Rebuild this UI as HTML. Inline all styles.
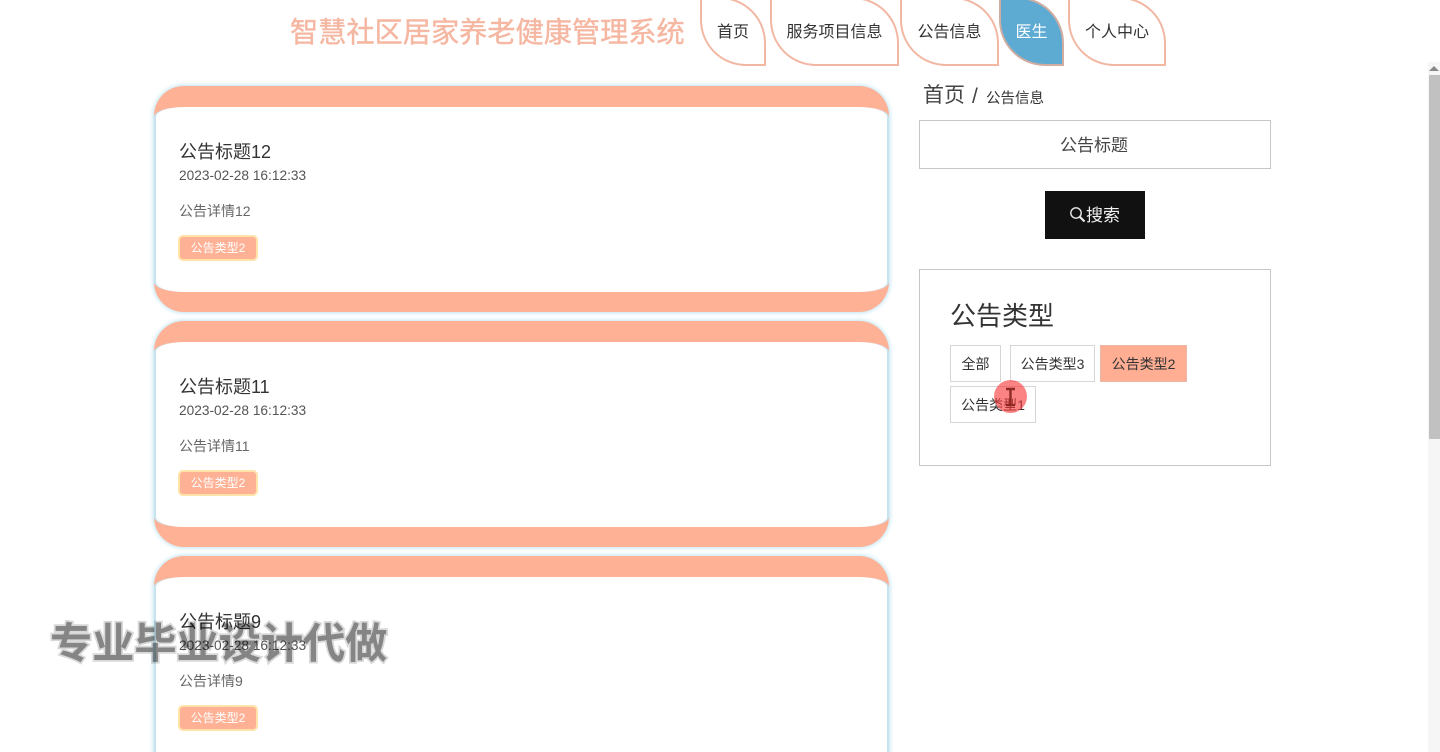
<!DOCTYPE html>
<html lang="zh-CN">
<head>
<meta charset="utf-8">
<title>智慧社区居家养老健康管理系统</title>
<style>
html,body{margin:0;padding:0;width:1440px;height:752px;overflow:hidden;background:#fff;}
body{position:relative;font-family:"Liberation Sans","Noto Sans CJK SC",sans-serif;color:#333;}
.a{position:absolute;white-space:nowrap;}
.nav{position:absolute;top:-3px;height:69px;box-sizing:border-box;border:2px solid #f2b7a3;border-radius:0 46px 0 46px;text-align:center;line-height:68px;font-size:16px;color:#333;}
.card{position:absolute;left:154px;width:735px;height:226px;box-sizing:border-box;background:#ffb196;border-radius:30px;box-shadow:0 0 4px 1px #bfe3ef;overflow:hidden;}
.inner{position:absolute;left:0;right:0;top:21px;height:185px;background:#fff;border-radius:30px/10px;border-left:2px solid #c6e3ee;border-right:2px solid #c6e3ee;box-sizing:border-box;}
.t{left:23px;font-size:18px;line-height:24px;color:#333;top:33px;}
.d{left:23px;font-size:13.7px;line-height:20px;color:#555;top:59px;}
.x{left:23px;font-size:14px;line-height:20px;color:#666;top:94px;}
.tag{left:22px;top:128px;width:80px;height:26px;box-sizing:border-box;background:#ffb196;border:2px solid #ffe3a8;border-radius:5px;color:#fff;font-size:12px;line-height:22px;text-align:center;}
.f{position:absolute;height:37px;box-sizing:border-box;border:1px solid #d6d6d6;font-size:14px;line-height:37px;text-align:center;color:#333;background:#fff;}
</style>
</head>
<body>

<div class="a" style="left:290px;top:12px;font-size:28.2px;line-height:40px;color:#f5b7a2;-webkit-text-stroke:.4px #f5b7a2;">智慧社区居家养老健康管理系统</div>

<div class="nav" style="left:700px;width:66px;">首页</div>
<div class="nav" style="left:770px;width:129px;">服务项目信息</div>
<div class="nav" style="left:900px;width:99px;">公告信息</div>
<div class="nav" style="left:999px;width:65px;background:#5dabd3;color:#fff;border-color:#d0ada0;">医生</div>
<div class="nav" style="left:1068px;width:98px;">个人中心</div>

<div class="card" style="top:86px;">
  <div class="inner">
    <div class="a t">公告标题12</div>
    <div class="a d">2023-02-28 16:12:33</div>
    <div class="a x">公告详情12</div>
    <div class="a tag">公告类型2</div>
  </div>
</div>
<div class="card" style="top:321px;">
  <div class="inner">
    <div class="a t">公告标题11</div>
    <div class="a d">2023-02-28 16:12:33</div>
    <div class="a x">公告详情11</div>
    <div class="a tag">公告类型2</div>
  </div>
</div>
<div class="card" style="top:556px;">
  <div class="inner">
    <div class="a t">公告标题9</div>
    <div class="a d">2023-02-28 16:12:33</div>
    <div class="a x">公告详情9</div>
    <div class="a tag">公告类型2</div>
  </div>
</div>

<div class="a" style="left:923px;top:81px;font-size:21px;line-height:30px;color:#444;">首页</div>
<div class="a" style="left:972px;top:82px;font-size:21px;line-height:30px;color:#444;">/</div>
<div class="a" style="left:986px;top:89px;font-size:14.5px;line-height:20px;color:#333;">公告信息</div>

<div class="a" style="left:919px;top:120px;width:352px;height:49px;box-sizing:border-box;border:1px solid #c6c6c6;text-align:center;font-size:17px;line-height:49px;text-indent:-2px;color:#444;">公告标题</div>

<div class="a" style="left:1045px;top:191px;width:100px;height:48px;background:#111;"></div>
<svg class="a" style="left:1069px;top:206px;" width="17" height="17" viewBox="0 0 17 17"><circle cx="7" cy="7" r="5.2" fill="none" stroke="#e8e8e8" stroke-width="1.4"/><path d="M10.8 10.8L15.5 15.5" stroke="#e8e8e8" stroke-width="2.2"/></svg>
<div class="a" style="left:1086px;top:203px;font-size:17px;line-height:26px;color:#f2f2f2;">搜索</div>

<div class="a" style="left:919px;top:269px;width:352px;height:197px;box-sizing:border-box;border:1px solid #c6c6c6;"></div>
<div class="a" style="left:950px;top:298px;font-size:26px;line-height:36px;color:#333;">公告类型</div>
<div class="f" style="left:950px;top:345px;width:51px;">全部</div>
<div class="f" style="left:1010px;top:345px;width:85px;">公告类型3</div>
<div class="f" style="left:1100px;top:345px;width:87px;background:#ffae94;border-color:#e8b8a4;">公告类型2</div>
<div class="f" style="left:950px;top:386px;width:86px;">公告类型1</div>

<div class="a" style="left:994px;top:380px;width:33px;height:33px;border-radius:50%;background:rgba(250,55,55,.62);"></div>
<svg class="a" style="left:1003px;top:386px;" width="15" height="22" viewBox="0 0 15 22"><path d="M3 3H12M3 19H12M7.5 3V19" stroke="#8f2a22" stroke-width="2.4" fill="none"/></svg>

<div class="a" style="left:50px;top:617px;font-size:42.2px;line-height:54px;font-weight:700;color:#858585;-webkit-text-stroke:3.5px #d8d8d8;paint-order:stroke fill;mix-blend-mode:multiply;">专业毕业设计代做</div>

<div class="a" style="left:1428px;top:62px;width:12px;height:690px;background:#f6f6f6;"></div>
<div class="a" style="left:1429px;top:66px;width:0;height:0;border-left:5px solid transparent;border-right:5px solid transparent;border-bottom:5px solid #888;"></div>
<div class="a" style="left:1429px;top:75px;width:11px;height:364px;background:#c1c1c1;"></div>

</body>
</html>
